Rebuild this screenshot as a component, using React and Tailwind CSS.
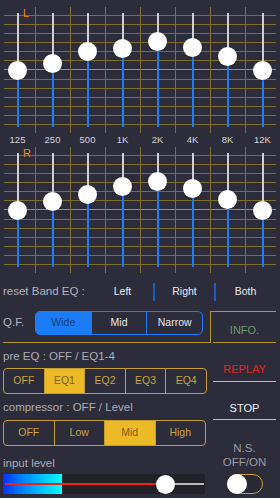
import React from "react";

const bands = ["125", "250", "500", "1K", "2K", "4K", "8K", "12K"];
// knob centre (px from top of panel)
const leftEq = [63.7, 56.3, 44.7, 41, 34, 40.3, 49.7, 63];
const rightEq = [63, 54.7, 47, 39.7, 34.7, 41.3, 52.3, 63.7];

const EqPanel = ({ label, values }) => (
  <div className="relative h-[126px] w-[280px]">
    {/* grid */}
    <svg className="absolute inset-0" width="280" height="126">
      {Array.from({ length: 13 }).map((_, i) => {
        const y = Math.round(8 + i * 9.08) + 0.5;
        return (
          <line
            key={"h" + i}
            x1="4"
            x2="276"
            y1={y}
            y2={y}
            stroke={i === 6 ? "#8f8f97" : "#7f6d2e"}
            strokeWidth="1"
          />
        );
      })}
      {[1, 2, 3, 4, 5, 6, 7].map((i) => (
        <line
          key={"v" + i}
          x1={35 * i + 0.5}
          x2={35 * i + 0.5}
          y1="0"
          y2="126"
          stroke="#7f6d2e"
          strokeWidth="1"
        />
      ))}
    </svg>

    <span className="absolute left-[23px] top-[1px] text-[11px] leading-none text-[#f08a12]">
      {label}
    </span>

    <div className="relative flex">
      {values.map((v, i) => (
        <div key={i} className="relative flex w-[35px] flex-col items-center pt-[6px]">
          <div className="w-[2px] bg-[#cfcfd5]" style={{ height: v - 6 }} />
          <div className="w-[2px] bg-[#1a7df7]" style={{ height: 120 - v }} />
          <div
            className="absolute h-[19px] w-[19px] rounded-full bg-white shadow-sm"
            style={{ top: v - 9.5 }}
          />
        </div>
      ))}
    </div>
  </div>
);

export default function App() {
  return (
    <div className="h-[498px] w-[280px] overflow-hidden bg-[#2c2c3b] font-['Liberation_Sans',Arial,sans-serif]">
      {/* L / R equaliser */}
      <div className="pt-[7px]">
        <EqPanel label="L" values={leftEq} />
        <div className="flex h-[14px] items-center">
          {bands.map((b) => (
            <span key={b} className="w-[35px] text-center text-[9.5px] text-[#d4d4da]">
              {b}
            </span>
          ))}
        </div>
        <EqPanel label="R" values={rightEq} />
      </div>

      {/* reset Band EQ */}
      <div className="mt-[10px] flex h-[18px] items-center">
        <span className="w-[92px] pl-[3px] text-[11.5px] text-[#b4b4bc]">reset Band EQ :</span>
        <span className="w-[61px] text-center text-[10.5px] text-[#ececf0]">Left</span>
        <div className="h-[18px] w-[2px] bg-[#1a5fc0]" />
        <span className="w-[59px] text-center text-[10.5px] text-[#ececf0]">Right</span>
        <div className="h-[18px] w-[2px] bg-[#1a5fc0]" />
        <span className="w-[59px] text-center text-[10.5px] text-[#ececf0]">Both</span>
      </div>

      <div className="mt-[10px] flex">
        {/* left column */}
        <div className="w-[210px]">
          {/* Q.F. */}
          <div className="ml-[3px] flex h-[32px] items-start border-b-[1.5px] border-[#b3952f]">
            <span className="flex h-[24px] w-[32px] items-center text-[11.5px] text-[#b4b4bc]">Q.F.</span>
            <div className="flex h-[24px] w-[168px] overflow-hidden rounded-[5px] border-[1.5px] border-[#1a7df7] text-[10.5px]">
              <span className="flex flex-1 items-center justify-center bg-[#1a7df7] text-[#133c7c]">Wide</span>
              <span className="flex flex-1 items-center justify-center border-l-[1.5px] border-[#1a7df7] text-[#e8e8ec]">Mid</span>
              <span className="flex flex-1 items-center justify-center border-l-[1.5px] border-[#1a7df7] text-[#e8e8ec]">Narrow</span>
            </div>
          </div>

          {/* pre EQ */}
          <p className="mt-[6px] pl-[3px] text-[11.5px] leading-[14px] text-[#acacb4]">pre EQ : OFF / EQ1-4</p>
          <div className="ml-[3px] mt-[5px] flex h-[26px] w-[204px] overflow-hidden rounded-[4px] border-[1.5px] border-[#c49f2f] text-[10.5px]">
            <span className="flex flex-1 items-center justify-center text-[#caa43c]">OFF</span>
            <span className="flex flex-1 items-center justify-center border-l-[1.5px] border-[#c49f2f] bg-[#ecb927] text-[#7d5f12]">EQ1</span>
            <span className="flex flex-1 items-center justify-center border-l-[1.5px] border-[#c49f2f] text-[#caa43c]">EQ2</span>
            <span className="flex flex-1 items-center justify-center border-l-[1.5px] border-[#c49f2f] text-[#caa43c]">EQ3</span>
            <span className="flex flex-1 items-center justify-center border-l-[1.5px] border-[#c49f2f] text-[#caa43c]">EQ4</span>
          </div>

          {/* compressor */}
          <p className="mt-[6px] pl-[3px] text-[11.5px] leading-[14px] text-[#acacb4]">compressor : OFF / Level</p>
          <div className="ml-[3px] mt-[6px] flex h-[26px] w-[203px] overflow-hidden rounded-[4px] border-[1.5px] border-[#c49f2f] text-[10.5px]">
            <span className="flex flex-1 items-center justify-center text-[#caa43c]">OFF</span>
            <span className="flex flex-1 items-center justify-center border-l-[1.5px] border-[#c49f2f] text-[#caa43c]">Low</span>
            <span className="flex flex-1 items-center justify-center border-l-[1.5px] border-[#c49f2f] bg-[#ecb927] text-[#7d5f12]">Mid</span>
            <span className="flex flex-1 items-center justify-center border-l-[1.5px] border-[#c49f2f] text-[#caa43c]">High</span>
          </div>

          {/* input level */}
          <p className="mt-[10px] pl-[3px] text-[11.5px] leading-[14px] text-[#acacb4]">input level</p>
          <div className="relative ml-[3px] mt-[4px] h-[20px] w-[202px] bg-[#212127]">
            <div className="h-full w-[59px] bg-linear-to-r from-[#1428ff] to-[#12ffff]" />
            <div className="absolute left-[2px] top-[9px] h-[2px] w-[152px] bg-[#f0201a]" />
            <div className="absolute left-[172px] top-[9px] h-[2px] w-[29px] bg-[#b9b9bf]" />
            <div className="absolute left-[153px] top-[0.5px] h-[19px] w-[19px] rounded-full bg-white shadow-sm" />
          </div>
        </div>

        {/* right column */}
        <div className="w-[66px]">
          <div className="h-[32px] border-l-[1.5px] border-t-[1.5px] border-[#b3952f]">
            <div className="ml-[2px] flex h-full items-center justify-center border-b-[1.5px] border-[#b3952f] pt-[6px] text-[11px] text-[#6f9a6f]">
              INFO.
            </div>
          </div>
          <div className="ml-[3px] flex h-[39px] items-end justify-center border-b-[1.5px] border-[#bdbdc3] pb-[5px] text-[11px] leading-[14px] text-[#e8251a]">
            REPLAY
          </div>
          <div className="ml-[3px] flex h-[38px] items-end justify-center border-b-[1.5px] border-[#bdbdc3] pb-[4px] text-[11px] leading-[14px] text-[#f2f2f4]">
            STOP
          </div>
          <p className="ml-[3px] mt-[21px] text-center text-[11.5px] leading-[14px] text-[#9c9ca4]">
            N.S.
            <br />
            OFF/ON
          </p>
          <div className="ml-[17px] mt-[5px]">
            <div className="relative h-[20px] w-[36px] rounded-full border-[1.5px] border-[#c9a030] bg-[#2a2a36]">
              <div className="absolute -left-[1.5px] -top-[1.5px] h-[20px] w-[20px] rounded-full bg-white shadow-sm" />
            </div>
          </div>
        </div>
      </div>
    </div>
  );
}
